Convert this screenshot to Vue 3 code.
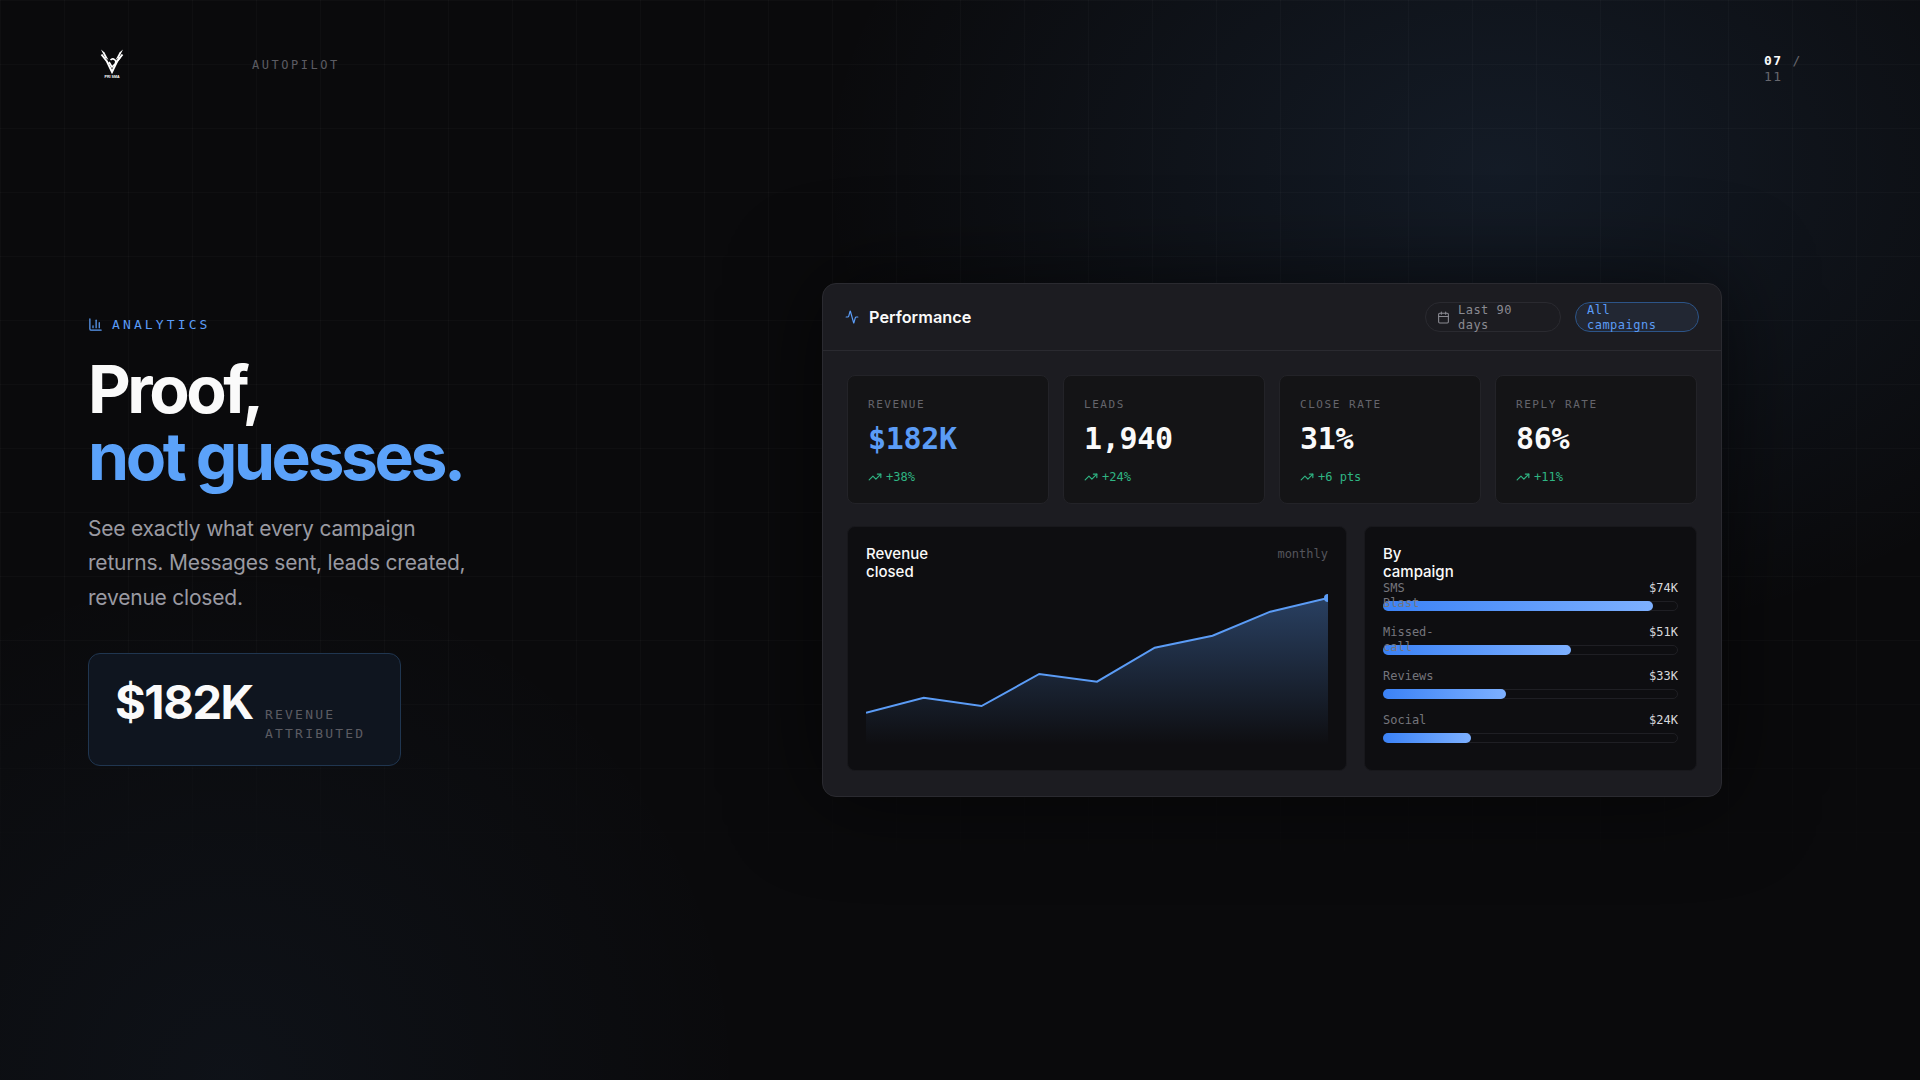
<template>
  <div class="page">
    <header class="topbar">
      <div class="logo">
        <svg width="24" height="30" viewBox="0 0 24 30" fill="none">
          <path d="M1 0.5 L4.5 3.5 L8.5 11 L5 8.5 Z" fill="#fff" />
          <path d="M23 0.5 L19.5 3.5 L15.5 11 L19 8.5 Z" fill="#fff" />
          <path d="M1.5 5.5 L7 12.5 L12 23 L17 12.5 L22.5 5.5" stroke="#fff" stroke-width="2" stroke-linejoin="miter" />
          <path d="M9 13 L12 18 L15 15 A3 3 0 0 0 10.5 11 M15 15 L20 8.5" stroke="#fff" stroke-width="1.6" />
          <text x="12" y="29" text-anchor="middle" class="logo-text">PRI SMA</text>
        </svg>
      </div>
      <span class="product">AUTOPILOT</span>
      <div class="pager"><b>07</b> <i>/</i> <span>11</span></div>
    </header>

    <main class="main">
      <section class="intro">
        <div class="eyebrow">
          <svg class="eyebrow-icon" viewBox="0 0 24 24" fill="none" stroke="currentColor" stroke-width="2" stroke-linecap="round" stroke-linejoin="round">
            <path d="M3 3v16a2 2 0 0 0 2 2h16" />
            <path d="M18 17V9" />
            <path d="M13 17V5" />
            <path d="M8 17v-3" />
          </svg>
          ANALYTICS
        </div>
        <h1>Proof,<br /><em>not guesses.</em></h1>
        <p class="lead">See exactly what every campaign returns. Messages sent, leads created, revenue closed.</p>
        <div class="callout">
          <strong>$182K</strong>
          <span>REVENUE ATTRIBUTED</span>
        </div>
      </section>

      <section class="panel">
        <div class="panel-head">
          <svg class="pulse" viewBox="0 0 24 24" fill="none" stroke="currentColor" stroke-width="2" stroke-linecap="round" stroke-linejoin="round">
            <path d="M22 12h-2.48a2 2 0 0 0-1.93 1.46l-2.35 8.36a.25.25 0 0 1-.48 0L9.24 2.18a.25.25 0 0 0-.48 0l-2.35 8.36A2 2 0 0 1 4.49 12H2" />
          </svg>
          <span class="panel-title">Performance</span>
          <div class="pill range">
            <svg viewBox="0 0 24 24" fill="none" stroke="currentColor" stroke-width="2" stroke-linecap="round" stroke-linejoin="round">
              <path d="M8 2v4" />
              <path d="M16 2v4" />
              <rect x="3" y="4" width="18" height="18" rx="2" />
              <path d="M3 10h18" />
            </svg>
            <span>Last 90 days</span>
          </div>
          <div class="pill active"><span>All campaigns</span></div>
        </div>

        <div class="panel-body">
          <div class="stats">
            <div v-for="s in stats" :key="s.label" class="stat">
              <div class="stat-label">{{ s.label }}</div>
              <div class="stat-value" :class="{ blue: s.blue }">{{ s.value }}</div>
              <div class="stat-delta">
                <svg viewBox="0 0 24 24" fill="none" stroke="currentColor" stroke-width="2" stroke-linecap="round" stroke-linejoin="round">
                  <path d="M22 7 13.5 15.5 8.5 10.5 2 17" />
                  <path d="M16 7h6v6" />
                </svg>
                {{ s.delta }}
              </div>
            </div>
          </div>

          <div class="lower">
            <div class="card chart">
              <div class="card-head">
                <h3 class="chart-title">Revenue closed</h3>
                <span class="muted">monthly</span>
              </div>
              <svg class="plot" width="462" height="155" viewBox="0 0 462 155">
                <defs>
                  <linearGradient id="area" x1="0" y1="0" x2="0" y2="1">
                    <stop offset="0" stop-color="#5b9cf6" stop-opacity="0.35" />
                    <stop offset="1" stop-color="#5b9cf6" stop-opacity="0" />
                  </linearGradient>
                </defs>
                <polygon :points="areaPoints" fill="url(#area)" />
                <polyline :points="linePoints" fill="none" stroke="#5b9cf6" stroke-width="2" />
                <circle cx="462" cy="8" r="4" fill="#5b9cf6" />
              </svg>
            </div>

            <div class="card campaigns">
              <h3 class="campaigns-title">By campaign</h3>
              <div class="rows">
                <div v-for="c in campaigns" :key="c.name" class="row">
                  <div class="row-head">
                    <span class="row-name">{{ c.name }}</span>
                    <span class="row-value">{{ c.value }}</span>
                  </div>
                  <div class="track">
                    <div class="fill" :style="{ width: c.pct + '%' }"></div>
                  </div>
                </div>
              </div>
            </div>
          </div>
        </div>
      </section>
    </main>
  </div>
</template>

<script setup>
const stats = [
  { label: 'REVENUE', value: '$182K', delta: '+38%', blue: true },
  { label: 'LEADS', value: '1,940', delta: '+24%' },
  { label: 'CLOSE RATE', value: '31%', delta: '+6 pts' },
  { label: 'REPLY RATE', value: '86%', delta: '+11%' }
]

const campaigns = [
  { name: 'SMS Blast', value: '$74K', pct: 92 },
  { name: 'Missed-call', value: '$51K', pct: 64 },
  { name: 'Reviews', value: '$33K', pct: 42 },
  { name: 'Social', value: '$24K', pct: 30 }
]

const ys = [122.7, 107.7, 116, 84, 91.7, 57.7, 45.7, 21.7, 8]
const linePoints = ys.map((y, i) => `${i * 57.75},${y}`).join(' ')
const areaPoints = `0,155 ${linePoints} 462,155`
</script>

<style>
html,
body {
  margin: 0;
  background: #0a0a0c;
}
</style>

<style scoped>
.page {
  position: relative;
  width: 1920px;
  height: 1080px;
  overflow: hidden;
  display: flex;
  flex-direction: column;
  box-sizing: border-box;
  padding: 0 88px 128px;
  color: #fafafa;
  font-family: Inter, "Liberation Sans", sans-serif;
  background-color: #0a0a0c;
  background-image:
    radial-gradient(ellipse 680px 480px at 1500px 170px, rgba(96, 165, 250, 0.11), transparent 100%),
    radial-gradient(circle 520px at 230px 1080px, rgba(96, 165, 250, 0.05), transparent 100%);
}

/* faint grid, fades out towards the bottom */
.page::before {
  content: "";
  position: absolute;
  inset: 0;
  background-image:
    linear-gradient(rgba(255, 255, 255, 0.022) 1px, transparent 1px),
    linear-gradient(90deg, rgba(255, 255, 255, 0.022) 1px, transparent 1px);
  background-size: 64px 64px;
  -webkit-mask-image: linear-gradient(#000 60%, transparent 85%);
  mask-image: linear-gradient(#000 60%, transparent 85%);
}

.topbar {
  position: relative;
  height: 128px;
  flex: none;
  display: flex;
  align-items: center;
}

.logo {
  width: 48px;
  display: flex;
  justify-content: center;
}

.logo-text {
  font-family: "Liberation Sans", sans-serif;
  font-size: 3.6px;
  font-weight: 700;
  fill: #fff;
}

.product {
  margin-left: 116px;
  padding-top: 2px;
  font-family: "DejaVu Sans Mono", monospace;
  font-size: 12px;
  letter-spacing: 0.21em;
  color: #5c5c63;
}

.pager {
  margin-left: auto;
  width: 68px;
  padding-top: 10px;
  font-family: "DejaVu Sans Mono", monospace;
  font-size: 13px;
  line-height: 16.5px;
  letter-spacing: 0.1em;
  color: #66666d;
}

.pager b {
  color: #fafafa;
}

.pager i {
  font-style: normal;
  margin-left: 1px;
}

.pager span {
  display: block;
}

.main {
  position: relative;
  flex: 1;
  display: flex;
  align-items: center;
  justify-content: space-between;
  padding-right: 110px;
}

.intro {
  width: 400px;
  padding-top: 3px;
}

.eyebrow {
  display: flex;
  align-items: center;
  gap: 9px;
  font-family: "DejaVu Sans Mono", monospace;
  font-size: 13px;
  line-height: 15px;
  letter-spacing: 0.24em;
  color: #5b9cf6;
}

.eyebrow-icon {
  width: 15px;
  height: 15px;
}

h1 {
  margin: 24px 0 0;
  font-size: 66px;
  font-weight: 700;
  line-height: 67px;
  letter-spacing: -0.052em;
}

h1 em {
  font-style: normal;
  color: #5ba2fa;
}

.lead {
  margin: 22px 0 0;
  font-size: 21px;
  line-height: 34.1px;
  letter-spacing: -0.01em;
  color: #9a9aa2;
}

.callout {
  margin-top: 38px;
  width: 313px;
  height: 113px;
  box-sizing: border-box;
  padding: 20px 26px;
  display: flex;
  align-items: baseline;
  gap: 12px;
  border: 1px solid #203650;
  border-radius: 12px;
  background: #0f151f;
}

.callout strong {
  font-size: 47px;
  font-weight: 700;
  line-height: 56px;
  letter-spacing: -0.03em;
}

.callout span {
  width: 116px;
  font-family: "DejaVu Sans Mono", monospace;
  font-size: 13px;
  line-height: 19px;
  letter-spacing: 0.17em;
  color: #5c5c63;
}

.panel {
  width: 900px;
  height: 514px;
  box-sizing: border-box;
  background: #1c1c21;
  border: 1px solid #2a2a30;
  border-radius: 14px;
  box-shadow: 0 0 90px rgba(0, 0, 0, 0.6);
}

.panel-head {
  height: 66px;
  padding: 0 22px;
  display: flex;
  align-items: center;
  border-bottom: 1px solid #2a2a30;
}

.pulse {
  width: 14px;
  height: 14px;
  color: #5b9cf6;
  margin-right: 10px;
}

.panel-title {
  font-size: 16.3px;
  font-weight: 600;
  margin-right: auto;
}

.pill {
  height: 30px;
  box-sizing: border-box;
  display: flex;
  align-items: center;
  padding: 1px 11px 0;
  border-radius: 15px;
  font-family: "DejaVu Sans Mono", monospace;
  font-size: 12px;
  line-height: 15px;
  letter-spacing: 0.04em;
}

.range {
  width: 136px;
  gap: 8px;
  margin-right: 14px;
  border: 1px solid #2a2a30;
  color: #8a8a92;
}

.range svg {
  width: 13px;
  height: 13px;
  flex: none;
}

.active {
  width: 124px;
  border: 1px solid #2c5488;
  background: #222733;
  color: #5b9cf6;
}

.panel-body {
  padding: 24px;
}

.stats {
  display: grid;
  grid-template-columns: repeat(4, 1fr);
  gap: 14px;
}

.stat {
  height: 129px;
  box-sizing: border-box;
  padding: 21px 20px 0;
  background: #141416;
  border: 1px solid #232328;
  border-radius: 8px;
}

.stat-label {
  font-family: "DejaVu Sans Mono", monospace;
  font-size: 11px;
  line-height: 16px;
  letter-spacing: 0.14em;
  color: #65656c;
}

.stat-value {
  margin-top: 8px;
  font-family: "DejaVu Sans Mono", monospace;
  font-size: 30px;
  font-weight: 700;
  line-height: 36px;
  letter-spacing: -0.01em;
}

.stat-value.blue {
  color: #5b9cf6;
}

.stat-delta {
  margin-top: 12px;
  display: flex;
  align-items: center;
  gap: 4px;
  font-family: "DejaVu Sans Mono", monospace;
  font-size: 12px;
  line-height: 16px;
  color: #2fb583;
}

.stat-delta svg {
  width: 14px;
  height: 14px;
}

.lower {
  margin-top: 22px;
  display: grid;
  grid-template-columns: 3fr 2fr;
  gap: 17px;
}

.card {
  height: 245px;
  box-sizing: border-box;
  padding: 18px;
  background: #0e0e11;
  border: 1px solid #18181c;
  border-radius: 8px;
}

.card-head {
  display: flex;
  justify-content: space-between;
}

.chart-title,
.campaigns-title {
  margin: 0;
  width: 80px;
  font-size: 15px;
  font-weight: 500;
  line-height: 18px;
}

.muted {
  font-family: "DejaVu Sans Mono", monospace;
  font-size: 12px;
  line-height: 18px;
  color: #55555c;
}

.plot {
  display: block;
  margin-top: 9px;
  overflow: hidden;
}

.rows {
  display: flex;
  flex-direction: column;
  gap: 14px;
}

.row-head {
  position: relative;
  z-index: 1;
  height: 20px;
  display: flex;
  justify-content: space-between;
  font-family: "DejaVu Sans Mono", monospace;
  font-size: 12px;
  line-height: 15px;
}

.row-name {
  width: 60px;
  color: #75757c;
}

.row-value {
  color: #d8d8dc;
}

.track {
  height: 10px;
  box-sizing: border-box;
  border: 1px solid #1f1f24;
  border-radius: 5px;
}

.fill {
  height: 10px;
  margin: -1px 0 0 -1px;
  border-radius: 5px;
  background: linear-gradient(90deg, #3b82f6, #7db0ff);
}
</style>
